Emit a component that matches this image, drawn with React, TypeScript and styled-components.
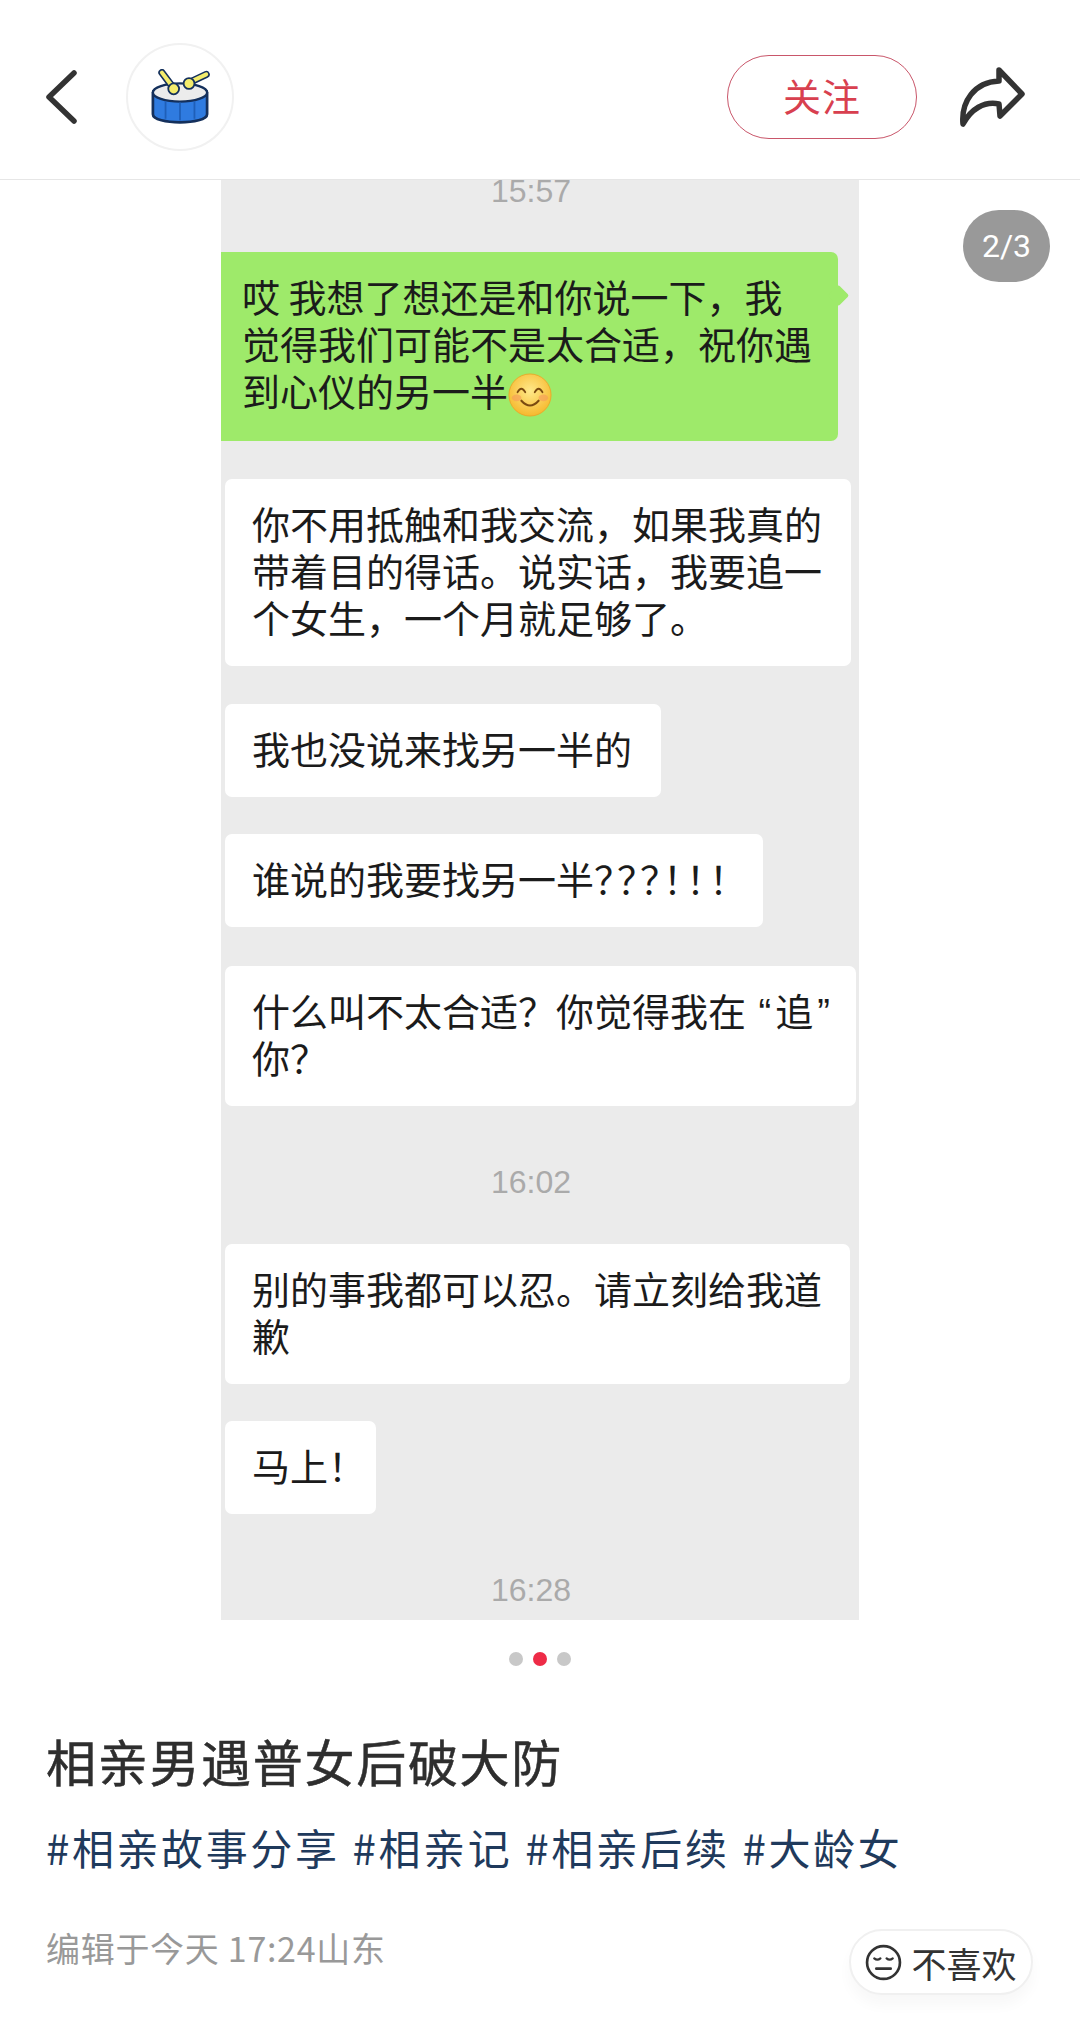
import React from "react";
import styled, { createGlobalStyle } from "styled-components";

const Global = createGlobalStyle`
  html, body { margin: 0; padding: 0; background: #fff; }
  body { font-family: "Noto Sans CJK SC", "Noto Sans", sans-serif; }
`;

const Page = styled.div`
  width: 1080px;
  height: 2040px;
  overflow: hidden;
  background: #fff;
`;

const Header = styled.header`
  height: 180px;
  box-sizing: border-box;
  border-bottom: 1px solid #e6e6e6;
  display: flex;
  align-items: center;
  padding: 14px 54px 0 44px;
`;

const BackIcon = styled.svg`
  width: 34px;
  height: 56px;
  flex: none;
`;

const Avatar = styled.div`
  width: 108px;
  height: 108px;
  margin-left: 48px;
  border-radius: 50%;
  border: 2px solid #f1f1f1;
  box-sizing: border-box;
  display: flex;
  align-items: center;
  justify-content: center;
`;

const Spacer = styled.div`
  flex: 1;
`;

const FollowButton = styled.button`
  width: 190px;
  height: 84px;
  border-radius: 42px;
  border: 1.5px solid #c9566a;
  background: #fff;
  color: #d8404f;
  font: 400 38px/1 "Noto Sans CJK SC", sans-serif;
  letter-spacing: 1px;
  padding: 0 0 4px;
`;

const ShareIcon = styled.svg`
  width: 68px;
  height: 62px;
  margin-left: 41px;
  flex: none;
`;

const Carousel = styled.section`
  position: relative;
  height: 1440px;
  display: flex;
  justify-content: center;
`;

const Counter = styled.div`
  position: absolute;
  left: 963px;
  top: 30px;
  width: 87px;
  height: 72px;
  border-radius: 36px;
  background: #999;
  color: #fff;
  font: 400 32px/72px "Roboto", sans-serif;
  text-align: center;
`;

const Chat = styled.div`
  width: 638px;
  height: 100%;
  overflow: hidden;
  background: #ebebeb;
  display: flex;
  flex-direction: column;
  align-items: flex-start;
`;

const Time = styled.div<{ $top: number; $bottom: number }>`
  align-self: center;
  margin-top: ${(p) => p.$top}px;
  margin-bottom: ${(p) => p.$bottom}px;
  padding-right: 18px;
  color: #aaaaaa;
  font: 400 32px/34px "Liberation Sans", sans-serif;
`;

const Bubble = styled.div<{ $mine?: boolean; $gap?: number; $right?: number }>`
  position: relative;
  margin-bottom: ${(p) => p.$gap ?? 38}px;
  margin-left: ${(p) => (p.$mine ? 0 : 4)}px;
  padding: 20px ${(p) => p.$right ?? 29}px ${(p) => (p.$mine ? 28 : 26)}px ${(p) => (p.$mine ? 21 : 27)}px;
  border-radius: ${(p) => (p.$mine ? "0 7px 7px 0" : "7px")};
  background: ${(p) => (p.$mine ? "#9eea6a" : "#ffffff")};
  color: #1b1b1b;
  font-size: 38px;
  line-height: 47px;
  white-space: nowrap;

  ${(p) =>
    p.$mine &&
    `&::after {
      content: "";
      position: absolute;
      right: -8px;
      top: 36px;
      width: 15px;
      height: 15px;
      background: #9eea6a;
      transform: rotate(45deg);
      border-radius: 2px;
    }`}
`;

const Narrow = styled.span<{ $tight: number }>`
  letter-spacing: ${(p) => p.$tight}px;
`;

const Quote = styled.span`
  font-family: "Liberation Sans", sans-serif;
  line-height: 0;
  margin: 0 4px;
`;

const Emoji = styled.svg`
  width: 44px;
  height: 44px;
  vertical-align: 3px;
  margin: -14px 0;
`;

const Dots = styled.div`
  display: flex;
  justify-content: center;
  gap: 10px;
  margin-top: 32px;
`;

const Dot = styled.span<{ $on?: boolean }>`
  width: 14px;
  height: 14px;
  border-radius: 50%;
  background: ${(p) => (p.$on ? "#ee2b47" : "#c8c8c8")};
`;

const Body = styled.div`
  padding: 0 47px 0 46px;
`;

const Title = styled.h1`
  margin: 58px 0 0;
  color: #2e2e2e;
  font-weight: 400;
  font-size: 50px;
  line-height: 72px;
  letter-spacing: 1.7px;
  -webkit-text-stroke: 0.5px #2e2e2e;
`;

const Tags = styled.div`
  margin-top: 19px;
  display: flex;
  gap: 13px;
  white-space: nowrap;
`;

const Tag = styled.span`
  color: #1f3a5c;
  font-size: 42px;
  line-height: 64px;
  letter-spacing: 2.6px;
`;

const MetaRow = styled.div`
  margin-top: 36px;
  display: flex;
  align-items: flex-start;
  justify-content: space-between;
`;

const Meta = styled.div`
  margin-top: 10px;
  color: #999;
  font-size: 34px;
  line-height: 46px;
  letter-spacing: 0.7px;
  white-space: nowrap;
`;

const Dislike = styled.button`
  width: 184px;
  height: 66px;
  margin-top: 14px;
  box-sizing: border-box;
  border: 2px solid #f0f0f0;
  border-radius: 33px;
  background: #fff;
  box-shadow: 0 10px 14px rgba(0, 0, 0, 0.03);
  display: flex;
  align-items: center;
  justify-content: center;
  gap: 9px;
  padding: 0;
  color: #333;
  font: 400 35px/1 "Noto Sans CJK SC", sans-serif;
`;

const FaceIcon = styled.svg`
  width: 37px;
  height: 37px;
  flex: none;
`;

const Drum = () => (
  <svg width="60" height="56" viewBox="0 0 66 62">
    <path d="M3 26 C3 16 63 16 63 26 V50 C63 62 3 62 3 50 Z" fill="#2f7be0" stroke="#14305c" strokeWidth="3" strokeLinejoin="round" />
    <ellipse cx="33" cy="26" rx="30" ry="10" fill="#ececec" stroke="#14305c" strokeWidth="2.5" />
    <path d="M17 36 V55 M33 37 V57 M49 36 V55" stroke="#1f5fb8" strokeWidth="2" />
    <path d="M13 4 L25 20" stroke="#14305c" strokeWidth="8" strokeLinecap="round" />
    <path d="M13 4 L25 20" stroke="#f3ec6c" strokeWidth="4.5" strokeLinecap="round" />
    <circle cx="26" cy="22" r="6" fill="#f3ec6c" stroke="#14305c" strokeWidth="2" />
    <path d="M62 6 L45 14" stroke="#14305c" strokeWidth="8" strokeLinecap="round" />
    <path d="M62 6 L45 14" stroke="#f3ec6c" strokeWidth="4.5" strokeLinecap="round" />
    <circle cx="43" cy="16" r="6" fill="#f3ec6c" stroke="#14305c" strokeWidth="2" />
  </svg>
);

export default function App() {
  return (
    <Page>
      <Global />
      <Header>
        <BackIcon viewBox="0 0 34 56">
          <path d="M30 4 L5 28 L30 52" fill="none" stroke="#333" strokeWidth="5.5" strokeLinecap="round" strokeLinejoin="round" />
        </BackIcon>
        <Avatar>
          <Drum />
        </Avatar>
        <Spacer />
        <FollowButton>关注</FollowButton>
        <ShareIcon viewBox="0 0 68 62">
          <path
            d="M41 4 L64 28 L42 50 L41 38 C26 35 13 43 5 58 C3 36 16 16 41 15 Z"
            fill="none"
            stroke="#333"
            strokeWidth="5.5"
            strokeLinejoin="round"
          />
        </ShareIcon>
      </Header>

      <Carousel>
        <Chat>
          <Time $top={-6} $bottom={44}>15:57</Time>
          <Bubble $mine $right={26}>
            哎 我想了想还是和你说一下，我
            <br />
            觉得我们可能不是太合适，祝你遇
            <br />
            到心仪的另一半
            <Emoji viewBox="0 0 46 46">
              <defs>
                <radialGradient id="face" cx="50%" cy="40%" r="60%">
                  <stop offset="0%" stopColor="#ffe98a" />
                  <stop offset="100%" stopColor="#f6b92e" />
                </radialGradient>
              </defs>
              <circle cx="23" cy="23" r="22" fill="url(#face)" stroke="#e9a92a" strokeWidth="1" />
              <ellipse cx="9" cy="26" rx="5" ry="3.5" fill="#f59a5a" opacity="0.6" />
              <ellipse cx="37" cy="26" rx="5" ry="3.5" fill="#f59a5a" opacity="0.6" />
              <path d="M10 20 Q14 13 18 20 M28 20 Q32 13 36 20" fill="none" stroke="#7a4a10" strokeWidth="2" strokeLinecap="round" />
              <path d="M14 29 Q23 39 32 29" fill="none" stroke="#7a4a10" strokeWidth="2.2" strokeLinecap="round" />
            </Emoji>
          </Bubble>
          <Bubble>
            你不用抵触和我交流，如果我真的
            <br />
            带着目的得话。说实话，我要追一
            <br />
            个女生，一个月就足够了。
          </Bubble>
          <Bubble $gap={37}>我也没说来找另一半的</Bubble>
          <Bubble $gap={39} $right={31}>
            谁说的我要找另一半<Narrow $tight={-15}>？？？！！！</Narrow>
          </Bubble>
          <Bubble $right={22} $gap={0}>
            什么叫不太合适？你觉得我在 <Quote>“</Quote>追<Quote>”</Quote>
            <br />
            你？
          </Bubble>
          <Time $top={59} $bottom={45}>16:02</Time>
          <Bubble $gap={37} $right={28}>
            别的事我都可以忍。请立刻给我道
            <br />
            歉
          </Bubble>
          <Bubble $gap={0}>
            马上<Narrow $tight={-19}>！</Narrow>
          </Bubble>
          <Time $top={59} $bottom={0}>16:28</Time>
        </Chat>
        <Counter>2/3</Counter>
      </Carousel>

      <Dots>
        <Dot />
        <Dot $on />
        <Dot />
      </Dots>

      <Body>
        <Title>相亲男遇普女后破大防</Title>
        <Tags>
          <Tag>#相亲故事分享</Tag>
          <Tag>#相亲记</Tag>
          <Tag>#相亲后续</Tag>
          <Tag>#大龄女</Tag>
        </Tags>
        <MetaRow>
          <Meta>编辑于今天 17:24山东</Meta>
          <Dislike>
            <FaceIcon viewBox="0 0 36 36">
              <circle cx="18" cy="18" r="16" fill="none" stroke="#333" strokeWidth="2.6" />
              <path d="M9 14 Q12 16.5 15 14 M21 14 Q24 16.5 27 14" fill="none" stroke="#333" strokeWidth="2.2" strokeLinecap="round" />
              <path d="M11 24 H25" stroke="#333" strokeWidth="2.6" strokeLinecap="round" />
            </FaceIcon>
            不喜欢
          </Dislike>
        </MetaRow>
      </Body>
    </Page>
  );
}
